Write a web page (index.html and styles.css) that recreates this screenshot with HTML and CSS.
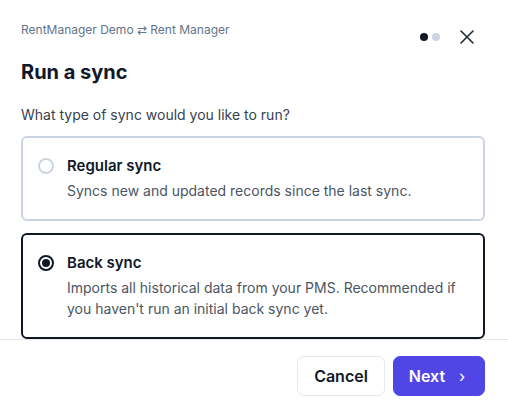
FILE: index.html
```html
<!DOCTYPE html>
<html lang="en">
<head>
    <meta charset="UTF-8">
    <meta name="viewport" content="width=device-width, initial-scale=1.0">
    <title>Run a sync</title>
    <link rel="stylesheet" href="styles.css">
</head>
<body>
    <div class="modal">
        <div class="modal-body">
            <div class="top-row">
                <div class="breadcrumb">RentManager Demo &#8644; Rent Manager</div>
                <div class="top-actions">
                    <div class="steps">
                        <span class="step active"></span>
                        <span class="step"></span>
                    </div>
                    <button type="button" class="close-button" aria-label="Close">
                        <svg width="16" height="16" viewBox="0 0 16 16">
                            <path d="M2 2L14 14M14 2L2 14" stroke="#1f2937" stroke-width="1.6" stroke-linecap="round"/>
                        </svg>
                    </button>
                </div>
            </div>
            <h2 class="title">Run a sync</h2>
            <p class="question">What type of sync would you like to run?</p>
            <div class="options">
                <label class="option">
                    <span class="radio"></span>
                    <span class="option-text">
                        <span class="option-title">Regular sync</span>
                        <span class="option-desc">Syncs new and updated records since the last sync.</span>
                    </span>
                </label>
                <label class="option selected">
                    <span class="radio"></span>
                    <span class="option-text">
                        <span class="option-title">Back sync</span>
                        <span class="option-desc">Imports all historical data from your PMS. Recommended if you haven't run an initial back sync yet.</span>
                    </span>
                </label>
            </div>
        </div>
        <div class="modal-footer">
            <button type="button" class="cancel-button">Cancel</button>
            <button type="button" class="next-button">Next <span class="chevron">&#8250;</span></button>
        </div>
    </div>
</body>
</html>
```

FILE: styles.css
```css
body {
    margin: 0;
    font-family: 'Inter', 'Liberation Sans', sans-serif;
    background: #ffffff;
    color: #111827;
}
.modal {
    width: 508px;
    height: 411px;
    display: flex;
    flex-direction: column;
}
.modal-body {
    padding: 22px 23px 0 21px;
}
.top-row {
    display: flex;
    justify-content: space-between;
    align-items: flex-start;
    height: 16px;
}
.breadcrumb {
    font-size: 12px;
    line-height: 16px;
    color: #64748b;
}
.top-actions {
    display: flex;
    align-items: center;
    gap: 19px;
    margin-top: 7px;
}
.steps {
    display: flex;
    gap: 4px;
}
.step {
    width: 8px;
    height: 8px;
    border-radius: 50%;
    background: #cbd5e1;
}
.step.active {
    background: #111827;
}
.close-button {
    border: none;
    background: none;
    padding: 0;
    width: 16px;
    height: 16px;
    display: flex;
    cursor: pointer;
    margin-right: 10px;
}
.title {
    margin: 20px 0 0;
    font-size: 20px;
    line-height: 28px;
    font-weight: 700;
    color: #111827;
}
.question {
    margin: 19px 0 0;
    font-size: 14px;
    line-height: 20px;
    color: #374151;
}
.options {
    display: flex;
    flex-direction: column;
    gap: 12px;
    margin-top: 11px;
}
.option {
    display: flex;
    align-items: flex-start;
    gap: 13px;
    padding: 18px 16px 18px 15px;
    border: 2px solid #cbd5e1;
    border-radius: 6px;
    cursor: pointer;
}
.option.selected {
    border-color: #111827;
}
.radio {
    flex: none;
    box-sizing: border-box;
    width: 16px;
    height: 16px;
    margin-top: 2px;
    border: 2px solid #cbd5e1;
    border-radius: 50%;
    display: flex;
    align-items: center;
    justify-content: center;
}
.option.selected .radio {
    border-color: #111827;
}
.option.selected .radio::after {
    content: '';
    width: 8px;
    height: 8px;
    border-radius: 50%;
    background: #111827;
}
.option-text {
    display: flex;
    flex-direction: column;
    gap: 4px;
}
.option-title {
    font-size: 15px;
    line-height: 20px;
    font-weight: 600;
    color: #111827;
}
.option-desc {
    font-size: 14px;
    line-height: 21px;
    color: #4b5563;
}
.modal-footer {
    margin-top: auto;
    border-top: 1px solid #e5e7eb;
    padding: 16px 23px 15px 0;
    display: flex;
    justify-content: flex-end;
    gap: 8px;
}
.modal-footer button {
    height: 40px;
    border-radius: 7px;
    font-family: inherit;
    font-size: 16px;
    font-weight: 600;
    cursor: pointer;
}
.cancel-button {
    width: 88px;
    background: #ffffff;
    border: 1px solid #e2e8f0;
    color: #111827;
}
.next-button {
    width: 92px;
    padding-right: 10px;
    background: #4f46e5;
    border: 1px solid #4f46e5;
    color: #ffffff;
}
.chevron {
    margin-left: 10px;
    font-size: 16px;
    font-weight: 400;
}
```
